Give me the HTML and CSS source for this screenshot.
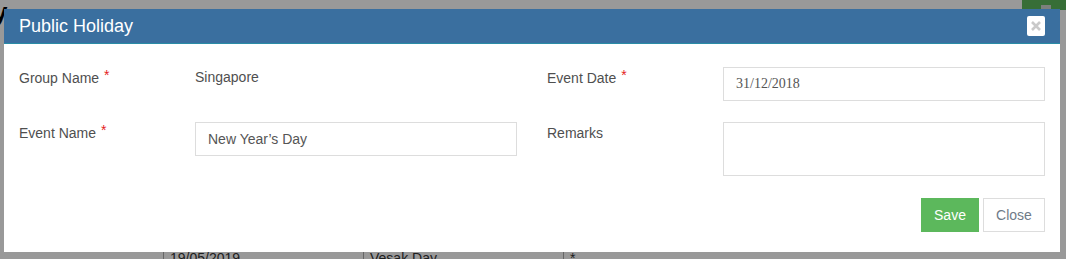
FILE: index.html
```html
<!DOCTYPE html>
<html lang="en">
<head>
<meta charset="utf-8">
<title>Public Holiday</title>
<link rel="stylesheet" href="styles.css">
</head>
<body>
<div class="page">
  <div class="page-top">
    <span class="page-title">y</span>
    <span class="page-btn"><span class="page-btn-icon"></span></span>
  </div>
  <div class="bg-table">
    <div class="bg-row">
      <div class="bg-cell">19/05/2019</div>
      <div class="bg-cell">Vesak Day</div>
      <div class="bg-cell">*</div>
    </div>
  </div>
</div>
<div class="overlay"></div>
<div class="modal">
  <div class="modal-header">
    <h4 class="modal-title">Public Holiday</h4>
    <button class="close-x" type="button" aria-label="Close">
      <svg width="10" height="10" viewBox="0 0 10 10"><path d="M1 1 L9 9 M9 1 L1 9" stroke="#c9c9c9" stroke-width="2.6" stroke-linecap="butt"/></svg>
    </button>
  </div>
  <div class="modal-body">
    <div class="form-grid">
      <div class="field">
        <label class="field-label">Group Name <span class="req">*</span></label>
        <div class="field-control"><span class="static">Singapore</span></div>
      </div>
      <div class="field">
        <label class="field-label">Event Date <span class="req">*</span></label>
        <div class="field-control"><input class="input input-date" type="text" value="31/12/2018"></div>
      </div>
      <div class="field">
        <label class="field-label">Event Name <span class="req">*</span></label>
        <div class="field-control"><input class="input" type="text" value="New Year’s Day"></div>
      </div>
      <div class="field">
        <label class="field-label">Remarks</label>
        <div class="field-control"><textarea class="input textarea"></textarea></div>
      </div>
    </div>
    <div class="modal-footer">
      <button class="btn btn-save" type="button">Save</button>
      <button class="btn btn-close" type="button">Close</button>
    </div>
  </div>
</div>
</body>
</html>
```
FILE: styles.css
```css
* { box-sizing: border-box; }
html, body { margin: 0; padding: 0; }
body {
  width: 1066px;
  height: 259px;
  overflow: hidden;
  background: #ffffff;
  font-family: "Liberation Sans", Arial, sans-serif;
  font-size: 14px;
  color: #555;
}
.page { position: relative; height: 259px; overflow: hidden; }
.page-top {
  display: flex;
  justify-content: space-between;
  align-items: flex-start;
  height: 40px;
}
.page-title {
  font-size: 26px;
  font-weight: bold;
  color: #000;
  line-height: 24px;
  margin-left: -7px;
}
.page-btn {
  display: block;
  width: 44px;
  height: 30px;
  margin-top: -20px;
  background: #5cb85c;
}
.page-btn-icon {
  display: block;
  width: 10px;
  height: 4px;
  margin: 25px 0 0 19px;
  background: #cfd6cf;
}
.bg-table { padding: 209px 0 0 163px; }
.bg-row { display: flex; }
.bg-cell {
  width: 200px;
  height: 12px;
  border-left: 1px solid #aaa;
  padding: 1px 6px 0;
  font-size: 14px;
  line-height: 16px;
  color: #333;
}
.overlay {
  position: fixed;
  inset: 0;
  background: rgba(0, 0, 0, 0.4);
}
.modal {
  position: fixed;
  top: 9px;
  left: 4px;
  width: 1056px;
  background: #fff;
}
.modal-header {
  display: flex;
  justify-content: space-between;
  align-items: center;
  height: 35px;
  padding: 0 15px;
  background: #3a6f9f;
  border-bottom: 1px solid #2a8ca6;
}
.modal-title {
  margin: 0;
  font-size: 18px;
  font-weight: normal;
  line-height: 20px;
  color: #fff;
}
.close-x {
  width: 18px;
  height: 20px;
  padding: 0;
  border: none;
  border-radius: 2px;
  background: #fff;
  display: flex;
  align-items: center;
  justify-content: center;
  cursor: pointer;
}
.close-x svg { display: block; }
.modal-body { padding: 23px 15px 20px; }
.form-grid {
  display: grid;
  grid-template-columns: 1fr 1fr;
  column-gap: 30px;
  row-gap: 21px;
}
.field { display: flex; align-items: flex-start; }
.field-label {
  width: 176px;
  flex: none;
  padding-top: 1px;
  line-height: 20px;
  color: #4f4f4f;
}
.req {
  color: #e4221d;
  position: relative;
  top: -3px;
  margin-left: 1px;
}
.field-control { flex: 1; }
.static { display: block; line-height: 20px; color: #4f4f4f; }
.input {
  display: block;
  width: 100%;
  height: 34px;
  margin: 0;
  padding: 0 12px;
  border: 1px solid #dddddd;
  border-radius: 0;
  background: #fff;
  font-family: "Liberation Sans", Arial, sans-serif;
  font-size: 14px;
  color: #555;
  outline: none;
}
.input-date { font-family: "Liberation Serif", "Times New Roman", serif; }
.textarea { height: 54px; resize: none; }
.modal-footer {
  display: flex;
  justify-content: flex-end;
  gap: 4px;
  margin-top: 22px;
}
.btn {
  height: 34px;
  padding: 0 12px;
  font-family: "Liberation Sans", Arial, sans-serif;
  font-size: 14px;
  line-height: 20px;
  border: 1px solid transparent;
  border-radius: 0;
  cursor: pointer;
}
.btn-save { background: #5cb85c; border-color: #5cb85c; color: #fff; width: 58px; }
.btn-close { background: #fff; border-color: #dddddd; color: #6f7b88; width: 62px; }
```
